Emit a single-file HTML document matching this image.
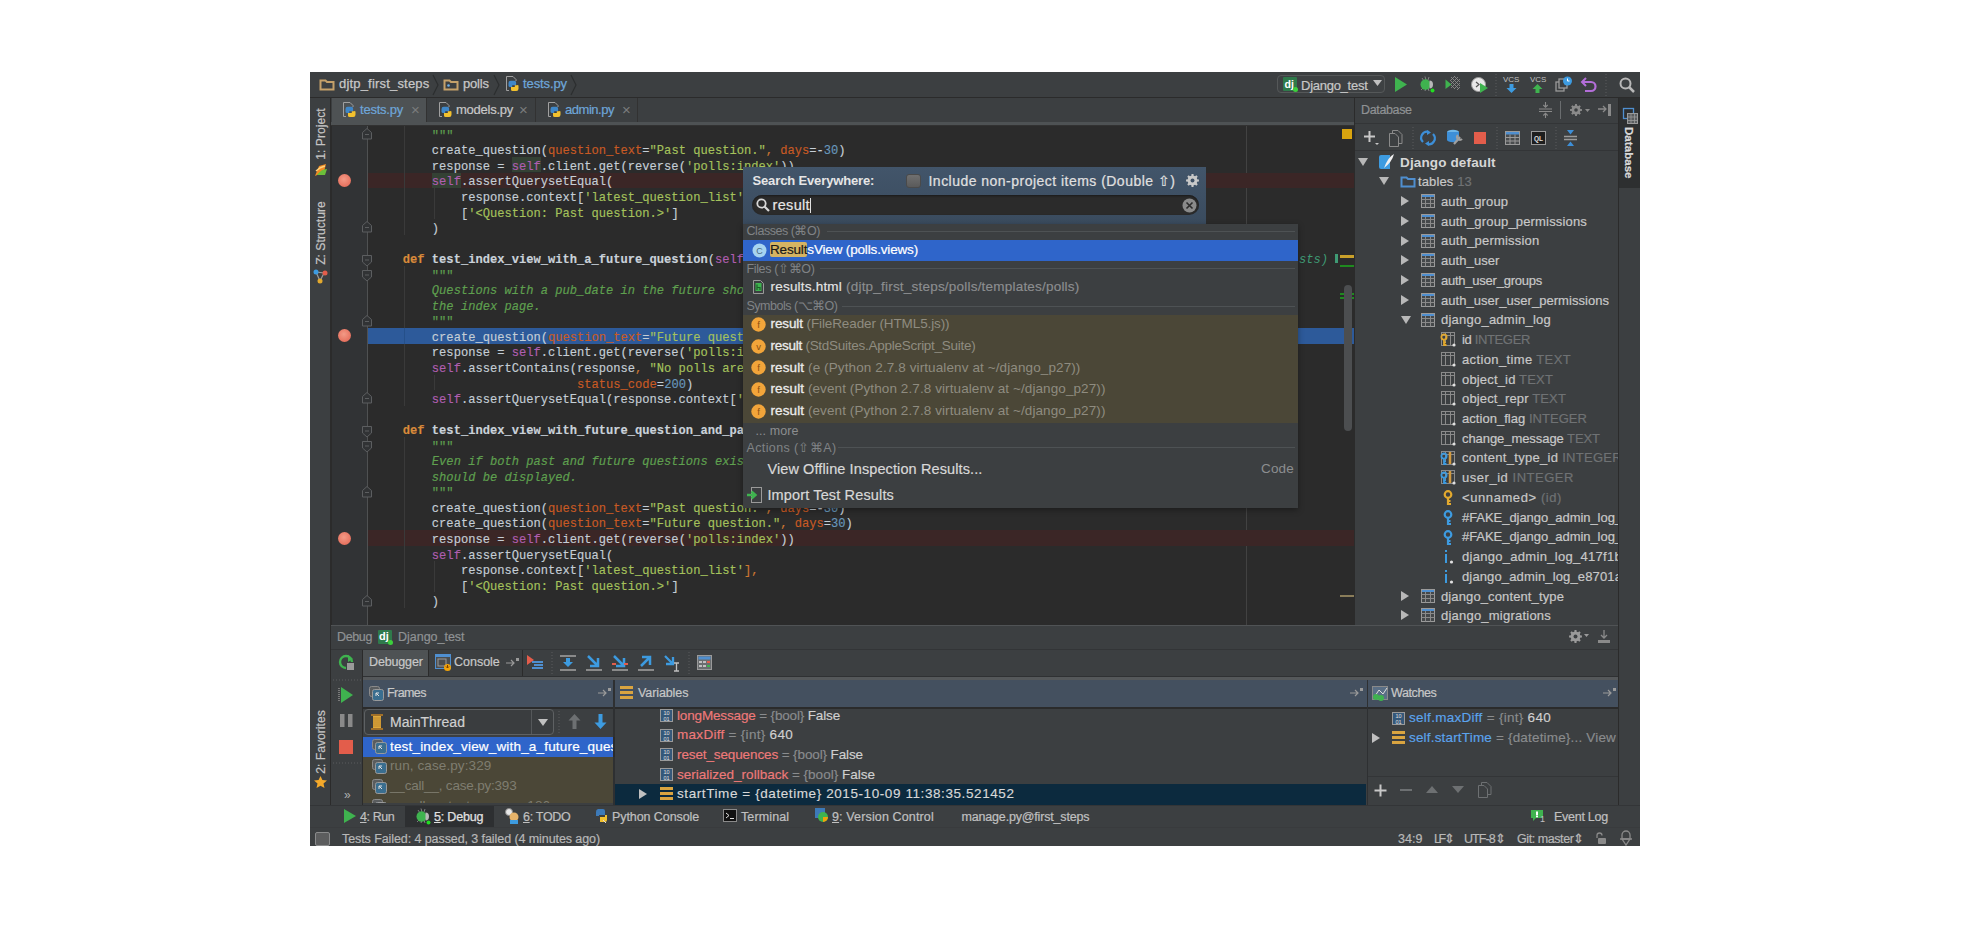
<!DOCTYPE html>
<html><head><meta charset="utf-8"><style>
html,body{margin:0;padding:0;background:#fff;width:1974px;height:935px;overflow:hidden;position:relative}
.a{position:absolute;box-sizing:border-box}
.t{position:absolute;white-space:pre;line-height:20px;height:20px;font-family:'Liberation Sans', sans-serif}
svg.a{overflow:visible}
</style></head><body>
<div class="a" style="left:310px;top:72px;width:1330px;height:774px;background:#3c3f41;"></div>
<div class="a" style="left:310px;top:97px;width:1330px;height:1px;background:#2b2b2b;"></div>
<div class="a" style="left:330px;top:98px;width:1px;height:707px;background:#2b2b2b;"></div>
<div class="a" style="left:331px;top:98px;width:1023px;height:24px;background:#3c3f41;"></div>
<div class="a" style="left:332px;top:98px;width:94px;height:24px;background:#4e5254;"></div>
<div class="a" style="left:426px;top:98px;width:1px;height:24px;background:#323232;"></div>
<div class="a" style="left:535px;top:98px;width:1px;height:24px;background:#323232;"></div>
<div class="a" style="left:637px;top:98px;width:1px;height:24px;background:#323232;"></div>
<div class="a" style="left:331px;top:122px;width:1023px;height:4px;background:#4e5254;"></div>
<div class="a" style="left:331px;top:125px;width:1023px;height:1px;background:#323232;"></div>
<div class="a" style="left:331px;top:126px;width:1024px;height:499px;background:#2b2b2b;"></div>
<div class="a" style="left:332px;top:126px;width:35px;height:499px;background:#313335;"></div>
<div class="a" style="left:367px;top:126px;width:1px;height:499px;background:#4f5152;"></div>
<div class="a" style="left:1246px;top:126px;width:1px;height:499px;background:#424242;"></div>
<div class="a" style="left:1354px;top:98px;width:1px;height:527px;background:#2b2b2b;"></div>
<div class="a" style="left:1355px;top:98px;width:263px;height:527px;background:#3c3f41;"></div>
<div class="a" style="left:1355px;top:123px;width:263px;height:1px;background:#333537;"></div>
<div class="a" style="left:1355px;top:150px;width:263px;height:1px;background:#333537;"></div>
<div class="a" style="left:1618px;top:98px;width:1px;height:707px;background:#2b2b2b;"></div>
<div class="a" style="left:1619px;top:98px;width:21px;height:90px;background:#2d2f30;"></div>
<div class="a" style="left:331px;top:625px;width:1287px;height:1.3px;background:#505355;"></div>
<div class="a" style="left:331px;top:626px;width:1287px;height:24px;background:#3c3f41;"></div>
<div class="a" style="left:331px;top:650px;width:1287px;height:26px;background:#3c3f41;"></div>
<div class="a" style="left:331px;top:649.3px;width:1287px;height:1px;background:#333537;"></div>
<div class="a" style="left:363px;top:676px;width:1255px;height:1px;background:#2f3133;"></div>
<div class="a" style="left:363px;top:677px;width:1255px;height:3px;background:#55585a;"></div>
<div class="a" style="left:363px;top:650px;width:66px;height:26px;background:#4e5254;"></div>
<div class="a" style="left:428px;top:650px;width:1px;height:26px;background:#2b2b2b;"></div>
<div class="a" style="left:522px;top:650px;width:1px;height:26px;background:#2b2b2b;"></div>
<div class="a" style="left:362px;top:650px;width:1px;height:155px;background:#2b2b2b;"></div>
<div class="a" style="left:363px;top:680px;width:1255px;height:27px;background:#44505f;"></div>
<div class="a" style="left:363px;top:707px;width:1255px;height:2px;background:#2b2b2b;"></div>
<div class="a" style="left:613px;top:680px;width:1.5px;height:125px;background:#2e3032;"></div>
<div class="a" style="left:1366.5px;top:680px;width:1.5px;height:125px;background:#2e3032;"></div>
<div class="a" style="left:363px;top:709px;width:250px;height:96px;background:#3c3f41;"></div>
<div class="a" style="left:363px;top:737px;width:250px;height:20px;background:#2f65ca;"></div>
<div class="a" style="left:363px;top:757px;width:250px;height:48px;background:#4b4737;"></div>
<div class="a" style="left:615px;top:709px;width:751px;height:96px;background:#3c3f41;"></div>
<div class="a" style="left:615px;top:784px;width:751px;height:21px;background:#0c2a3e;"></div>
<div class="a" style="left:1368px;top:709px;width:250px;height:96px;background:#3c3f41;"></div>
<div class="a" style="left:1368px;top:776px;width:250px;height:1px;background:#333537;"></div>
<div class="a" style="left:310px;top:805px;width:1330px;height:1px;background:#333537;"></div>
<div class="a" style="left:405px;top:806px;width:89px;height:21px;background:#2d2f31;"></div>
<div class="a" style="left:368px;top:172.65px;width:986px;height:15.55px;background:#3b2626;"></div>
<div class="a" style="left:432px;top:172.95000000000002px;width:29px;height:15.55px;background:#344134;"></div>
<div class="a" style="left:511.7px;top:157.4px;width:29px;height:14.950000000000001px;background:#344134;"></div>
<div class="a" style="left:368px;top:328.15px;width:986px;height:15.55px;background:#2d5a9a;"></div>
<div class="a" style="left:368px;top:530.3px;width:986px;height:15.55px;background:#3b2626;"></div>
<div class="a" style="left:338px;top:174.0px;width:13px;height:13px;border-radius:50%;background:radial-gradient(circle at 45% 40%,#f39a86,#e0604e)"></div>
<div class="a" style="left:338px;top:329.4px;width:13px;height:13px;border-radius:50%;background:radial-gradient(circle at 45% 40%,#f39a86,#e0604e)"></div>
<div class="a" style="left:338px;top:531.6px;width:13px;height:13px;border-radius:50%;background:radial-gradient(circle at 45% 40%,#f39a86,#e0604e)"></div>
<div class="a" style="left:404px;top:126.0px;width:1px;height:108.85000000000002px;background:#3a3a3a;"></div>
<div class="a" style="left:404px;top:265.95000000000005px;width:1px;height:139.95px;background:#3a3a3a;"></div>
<div class="a" style="left:404px;top:437.0px;width:1px;height:171.04999999999995px;background:#3a3a3a;"></div>
<div class="a" style="left:434px;top:188.2px;width:1px;height:31.100000000000023px;background:#3a3a3a;"></div>
<div class="a" style="left:434px;top:561.4000000000001px;width:1px;height:31.09999999999991px;background:#3a3a3a;"></div>
<div class="a" style="left:434px;top:374.8px;width:1px;height:15.55px;background:#3a3a3a;"></div>
<div class="a" style="left:404px;top:328.15px;width:1px;height:15.55px;background:#25508a;"></div>
<svg class="a" style="left:362.3px;top:128.0px;" width="10" height="12" viewBox="0 0 10 12"><path d="M5 0.5 L9.5 4.5 V11 H0.5 V4.5z" fill="#313335" stroke="#5c5e60" stroke-width="1"/><path d="M3 6.5 H7" stroke="#5c5e60" stroke-width="1"/></svg>
<svg class="a" style="left:362.3px;top:221.3px;" width="10" height="12" viewBox="0 0 10 12"><path d="M5 0.5 L9.5 4.5 V11 H0.5 V4.5z" fill="#313335" stroke="#5c5e60" stroke-width="1"/><path d="M3 6.5 H7" stroke="#5c5e60" stroke-width="1"/></svg>
<svg class="a" style="left:362.3px;top:314.6px;" width="10" height="12" viewBox="0 0 10 12"><path d="M5 0.5 L9.5 4.5 V11 H0.5 V4.5z" fill="#313335" stroke="#5c5e60" stroke-width="1"/><path d="M3 6.5 H7" stroke="#5c5e60" stroke-width="1"/></svg>
<svg class="a" style="left:362.3px;top:392.35px;" width="10" height="12" viewBox="0 0 10 12"><path d="M5 0.5 L9.5 4.5 V11 H0.5 V4.5z" fill="#313335" stroke="#5c5e60" stroke-width="1"/><path d="M3 6.5 H7" stroke="#5c5e60" stroke-width="1"/></svg>
<svg class="a" style="left:362.3px;top:485.65000000000003px;" width="10" height="12" viewBox="0 0 10 12"><path d="M5 0.5 L9.5 4.5 V11 H0.5 V4.5z" fill="#313335" stroke="#5c5e60" stroke-width="1"/><path d="M3 6.5 H7" stroke="#5c5e60" stroke-width="1"/></svg>
<svg class="a" style="left:362.3px;top:594.5px;" width="10" height="12" viewBox="0 0 10 12"><path d="M5 0.5 L9.5 4.5 V11 H0.5 V4.5z" fill="#313335" stroke="#5c5e60" stroke-width="1"/><path d="M3 6.5 H7" stroke="#5c5e60" stroke-width="1"/></svg>
<svg class="a" style="left:362.3px;top:254.70000000000002px;" width="10" height="12" viewBox="0 0 10 12"><path d="M0.5 0.5 H9.5 V7 L5 11 L0.5 7z" fill="#313335" stroke="#5c5e60" stroke-width="1"/><path d="M3 5 H7" stroke="#5c5e60" stroke-width="1"/></svg>
<svg class="a" style="left:362.3px;top:270.25000000000006px;" width="10" height="12" viewBox="0 0 10 12"><path d="M0.5 0.5 H9.5 V7 L5 11 L0.5 7z" fill="#313335" stroke="#5c5e60" stroke-width="1"/><path d="M3 5 H7" stroke="#5c5e60" stroke-width="1"/></svg>
<svg class="a" style="left:362.3px;top:425.75px;" width="10" height="12" viewBox="0 0 10 12"><path d="M0.5 0.5 H9.5 V7 L5 11 L0.5 7z" fill="#313335" stroke="#5c5e60" stroke-width="1"/><path d="M3 5 H7" stroke="#5c5e60" stroke-width="1"/></svg>
<svg class="a" style="left:362.3px;top:441.3px;" width="10" height="12" viewBox="0 0 10 12"><path d="M0.5 0.5 H9.5 V7 L5 11 L0.5 7z" fill="#313335" stroke="#5c5e60" stroke-width="1"/><path d="M3 5 H7" stroke="#5c5e60" stroke-width="1"/></svg>
<div class="a" style="left:373.8px;top:126px;padding-top:2.8px;width:980px;height:496.2px;-webkit-text-stroke:0.15px;overflow:hidden;font-family:'Liberation Mono', monospace;font-size:12.1px;line-height:15.55px;color:#c5ced6;white-space:pre"><span style="color:#5fa04f">        """</span>
        create_question(<span style="color:#c85a24">question_text</span>=<span style="color:#a5c25c">"Past question."</span><span style="color:#cc7832">, </span><span style="color:#c85a24">days</span>=-<span style="color:#6897bb">30</span>)
        response = <span style="color:#b05eb0">self</span>.client.get(reverse(<span style="color:#a5c25c">'polls:index'</span>))
        <span style="color:#b05eb0">self</span>.assertQuerysetEqual(
            response.context[<span style="color:#a5c25c">'latest_question_list'</span><span style="color:#cc7832">],</span>
            [<span style="color:#a5c25c">'&lt;Question: Past question.&gt;'</span>]
        )

    <span style="color:#d98a3a;font-weight:bold">def </span><span style="color:#cad2da;font-weight:bold">test_index_view_with_a_future_question</span>(<span style="color:#b05eb0">self</span>):
<span style="color:#5fa04f">        """</span>
<span style="color:#5fa04f;font-style:italic">        Questions with a pub_date in the future should not be displayed on</span>
<span style="color:#5fa04f;font-style:italic">        the index page.</span>
<span style="color:#5fa04f">        """</span>
        create_question(<span style="color:#c85a24">question_text</span>=<span style="color:#a5c25c">"Future question."</span><span style="color:#cc7832">, </span><span style="color:#c85a24">days</span>=<span style="color:#6897bb">30</span>)
        response = <span style="color:#b05eb0">self</span>.client.get(reverse(<span style="color:#a5c25c">'polls:index'</span>))
        <span style="color:#b05eb0">self</span>.assertContains(response<span style="color:#cc7832">, </span><span style="color:#a5c25c">"No polls are available."</span><span style="color:#cc7832">,</span>
                            <span style="color:#c85a24">status_code</span>=<span style="color:#6897bb">200</span>)
        <span style="color:#b05eb0">self</span>.assertQuerysetEqual(response.context[<span style="color:#a5c25c">'latest_question_list'</span>], [])

    <span style="color:#d98a3a;font-weight:bold">def </span><span style="color:#cad2da;font-weight:bold">test_index_view_with_future_question_and_past_question</span>(<span style="color:#b05eb0">self</span>):
<span style="color:#5fa04f">        """</span>
<span style="color:#5fa04f;font-style:italic">        Even if both past and future questions exist, only past questions</span>
<span style="color:#5fa04f;font-style:italic">        should be displayed.</span>
<span style="color:#5fa04f">        """</span>
        create_question(<span style="color:#c85a24">question_text</span>=<span style="color:#a5c25c">"Past question."</span><span style="color:#cc7832">, </span><span style="color:#c85a24">days</span>=-<span style="color:#6897bb">30</span>)
        create_question(<span style="color:#c85a24">question_text</span>=<span style="color:#a5c25c">"Future question."</span><span style="color:#cc7832">, </span><span style="color:#c85a24">days</span>=<span style="color:#6897bb">30</span>)
        response = <span style="color:#b05eb0">self</span>.client.get(reverse(<span style="color:#a5c25c">'polls:index'</span>))
        <span style="color:#b05eb0">self</span>.assertQuerysetEqual(
            response.context[<span style="color:#a5c25c">'latest_question_list'</span><span style="color:#cc7832">],</span>
            [<span style="color:#a5c25c">'&lt;Question: Past question.&gt;'</span>]
        )</div>
<svg class="a" style="left:319px;top:77px;" width="16" height="14" viewBox="0 0 16 14"><path d="M1.5 3.5 h5 l1.5 1.5 h6.5 v7.5 h-13 z" fill="none" stroke="#c5a16a" stroke-width="2"/></svg>
<div class="t" style="left:339px;top:74px;font-size:13px;color:#c8c8c8;letter-spacing:0.185px;-webkit-text-stroke:0.25px #c8c8c8">djtp_first_steps</div>
<svg class="a" style="left:432px;top:74px;" width="8" height="22" viewBox="0 0 8 22"><path d="M1 1 L6 11 L1 21" fill="none" stroke="#2c2e2f" stroke-width="1.2"/></svg>
<svg class="a" style="left:443px;top:77px;" width="16" height="14" viewBox="0 0 16 14"><path d="M1.5 3.5 h5 l1.5 1.5 h6.5 v7.5 h-13 z" fill="none" stroke="#c5a16a" stroke-width="2"/><circle cx="5.5" cy="8.5" r="1.3" fill="#6fb0e8"/></svg>
<div class="t" style="left:463px;top:74px;font-size:13px;color:#c8c8c8;letter-spacing:-0.170px;-webkit-text-stroke:0.25px #c8c8c8">polls</div>
<svg class="a" style="left:493px;top:74px;" width="8" height="22" viewBox="0 0 8 22"><path d="M1 1 L6 11 L1 21" fill="none" stroke="#2c2e2f" stroke-width="1.2"/></svg>
<svg class="a" style="left:505px;top:76px;" width="14" height="16" viewBox="0 0 14 16"><path d="M4 14.5 H1.5 V0.5 H8 L11 3.5 V5" fill="none" stroke="#a0a0a0" stroke-width="1"/><path d="M3.5 10 V7 a2.2 2.2 0 0 1 2.2-2.2 h3.8 a1.6 1.6 0 0 1 1.6 1.6 V9.2 H7.2 V11 H5 a1.5 1.5 0 0 1-1.5-1z" fill="#3f87c8"/><path d="M13.5 9.5 V12.8 a2.2 2.2 0 0 1-2.2 2.2 H7.6 a1.6 1.6 0 0 1-1.6-1.6 V11 H9.8 V9.2 H12 a1.5 1.5 0 0 1 1.5 0.3z" fill="#f2c12e"/></svg>
<div class="t" style="left:523px;top:74px;font-size:13px;color:#6ea6d9;letter-spacing:-0.100px;-webkit-text-stroke:0.25px #6ea6d9">tests.py</div>
<svg class="a" style="left:570px;top:74px;" width="8" height="22" viewBox="0 0 8 22"><path d="M1 1 L6 11 L1 21" fill="none" stroke="#2c2e2f" stroke-width="1.2"/></svg>
<svg class="a" style="left:342px;top:102px;" width="14" height="16" viewBox="0 0 14 16"><path d="M4 14.5 H1.5 V0.5 H8 L11 3.5 V5" fill="none" stroke="#a0a0a0" stroke-width="1"/><path d="M3.5 10 V7 a2.2 2.2 0 0 1 2.2-2.2 h3.8 a1.6 1.6 0 0 1 1.6 1.6 V9.2 H7.2 V11 H5 a1.5 1.5 0 0 1-1.5-1z" fill="#3f87c8"/><path d="M13.5 9.5 V12.8 a2.2 2.2 0 0 1-2.2 2.2 H7.6 a1.6 1.6 0 0 1-1.6-1.6 V11 H9.8 V9.2 H12 a1.5 1.5 0 0 1 1.5 0.3z" fill="#f2c12e"/></svg>
<div class="t" style="left:360px;top:100px;font-size:13px;color:#6ea6d9;letter-spacing:-0.225px;-webkit-text-stroke:0.2px #6ea6d9">tests.py</div>
<div class="t" style="left:411px;top:100px;font-size:15px;color:#7a7c7d;">×</div>
<svg class="a" style="left:438px;top:102px;" width="14" height="16" viewBox="0 0 14 16"><path d="M4 14.5 H1.5 V0.5 H8 L11 3.5 V5" fill="none" stroke="#a0a0a0" stroke-width="1"/><path d="M3.5 10 V7 a2.2 2.2 0 0 1 2.2-2.2 h3.8 a1.6 1.6 0 0 1 1.6 1.6 V9.2 H7.2 V11 H5 a1.5 1.5 0 0 1-1.5-1z" fill="#3f87c8"/><path d="M13.5 9.5 V12.8 a2.2 2.2 0 0 1-2.2 2.2 H7.6 a1.6 1.6 0 0 1-1.6-1.6 V11 H9.8 V9.2 H12 a1.5 1.5 0 0 1 1.5 0.3z" fill="#f2c12e"/></svg>
<div class="t" style="left:456px;top:100px;font-size:13px;color:#c8c8c8;letter-spacing:-0.250px;-webkit-text-stroke:0.2px #c8c8c8">models.py</div>
<div class="t" style="left:519px;top:100px;font-size:15px;color:#7a7c7d;">×</div>
<svg class="a" style="left:547px;top:102px;" width="14" height="16" viewBox="0 0 14 16"><path d="M4 14.5 H1.5 V0.5 H8 L11 3.5 V5" fill="none" stroke="#a0a0a0" stroke-width="1"/><path d="M3.5 10 V7 a2.2 2.2 0 0 1 2.2-2.2 h3.8 a1.6 1.6 0 0 1 1.6 1.6 V9.2 H7.2 V11 H5 a1.5 1.5 0 0 1-1.5-1z" fill="#3f87c8"/><path d="M13.5 9.5 V12.8 a2.2 2.2 0 0 1-2.2 2.2 H7.6 a1.6 1.6 0 0 1-1.6-1.6 V11 H9.8 V9.2 H12 a1.5 1.5 0 0 1 1.5 0.3z" fill="#f2c12e"/></svg>
<div class="t" style="left:565px;top:100px;font-size:13px;color:#6ea6d9;letter-spacing:-0.469px;-webkit-text-stroke:0.2px #6ea6d9">admin.py</div>
<div class="t" style="left:622px;top:100px;font-size:15px;color:#7a7c7d;">×</div>
<div class="t" style="left:294.0px;top:123.5px;width:53px;text-align:center;font-size:12.2px;color:#c4c4c4;font-weight:normal;-webkit-text-stroke:0.2px #c4c4c4;transform:rotate(-90deg);transform-origin:50% 50%">1: Project</div>
<div class="t" style="left:286.5px;top:223.0px;width:68px;text-align:center;font-size:12.2px;color:#c4c4c4;font-weight:normal;-webkit-text-stroke:0.2px #c4c4c4;transform:rotate(-90deg);transform-origin:50% 50%">Z: Structure</div>
<div class="t" style="left:288.0px;top:731.5px;width:65px;text-align:center;font-size:12.2px;color:#c4c4c4;font-weight:normal;-webkit-text-stroke:0.2px #c4c4c4;transform:rotate(-90deg);transform-origin:50% 50%">2: Favorites</div>
<div class="t" style="left:1604.0px;top:142.0px;width:50px;text-align:center;font-size:11.6px;color:#d8d8d8;font-weight:bold;-webkit-text-stroke:0.2px #d8d8d8;transform:rotate(90deg);transform-origin:50% 50%">Database</div>
<div class="a" style="left:1277px;top:75px;width:108px;height:18px;border:1px solid #555859;border-radius:4px;background:#3e4143"></div>
<div class="a" style="left:1283px;top:77px;width:14px;height:14px;background:#2f7a4b;border-radius:1px"></div>
<div class="t" style="left:1284.5px;top:73.5px;font-size:10.5px;color:#ffffff;font-weight:bold;">dj</div>
<div class="a" style="left:1293px;top:87px;width:5px;height:5px;border-radius:50%;background:#3cd03c"></div>
<div class="t" style="left:1301px;top:75.5px;font-size:13px;color:#c8c8c8;letter-spacing:-0.263px;-webkit-text-stroke:0.2px #c8c8c8">Django_test</div>
<svg class="a" style="left:1373px;top:80px;" width="9" height="7" viewBox="0 0 9 7"><path d="M0 0 H9 L4.5 6z" fill="#c0c0c0"/></svg>
<svg class="a" style="left:1395px;top:77px;" width="12" height="15" viewBox="0 0 12 15"><path d="M0 0 L12 7.5 L0 15z" fill="#3fb34f"/></svg>
<svg class="a" style="left:1419px;top:75px;" width="17" height="18" viewBox="0 0 17 18"><path d="M3 3 L5 6 M6 1.5 L7 5 M10 2 L9 5 M13 8 L11 9 M2 15 L5 12 M6 16 L7 13 M10 16 L9 13" stroke="#8a8a8a" stroke-width="0.9"/><ellipse cx="6.5" cy="9.5" rx="5" ry="5.2" fill="#3fb34f"/><path d="M10.5 5.5 A3.5 4 0 0 1 10.5 13.5z" fill="#b8b8b8"/><circle cx="13.5" cy="15.5" r="2" fill="#22dd22"/></svg>
<svg class="a" style="left:1445px;top:76px;" width="16" height="16" viewBox="0 0 16 16"><g stroke="#8a8a8a" stroke-width="0.9" fill="none"><path d="M5 5 L10 0 M5 9 L13 1 M6 12 L15 3 M9 13 L15 7 M12 14 L15 11 M6 1 L15 10 M6 5 L14 13 M6 9 L10 13 M9 0 L15 6"/></g><path d="M0.5 3.5 L6.5 8.5 L0.5 13z" fill="#3fb34f"/></svg>
<svg class="a" style="left:1471px;top:76px;" width="17" height="17" viewBox="0 0 17 17"><circle cx="7.5" cy="8.5" r="7" fill="#e8e8e8" stroke="#9a9a9a"/><path d="M5 6 L8 8.5 L5 11" stroke="#555" fill="none" stroke-width="1.2"/><path d="M9 7 L17 12 L9 17z" fill="#3fb34f"/></svg>
<svg class="a" style="left:1495px;top:74px;" width="2" height="22" viewBox="0 0 2 22"><path d="M1 0 V22" stroke="#5a5d5f" stroke-dasharray="1 2"/></svg>
<div class="t" style="left:1503px;top:70px;font-size:8px;color:#c0c0c0;">VCS</div>
<svg class="a" style="left:1506px;top:84px;" width="11" height="9" viewBox="0 0 11 9"><path d="M3.5 0 H7.5 V4 H10.5 L5.5 9 L0.5 4 H3.5z" fill="#3d9be0"/></svg>
<div class="t" style="left:1530px;top:70px;font-size:8px;color:#c0c0c0;">VCS</div>
<svg class="a" style="left:1532px;top:84px;" width="11" height="9" viewBox="0 0 11 9"><path d="M5.5 0 L10.5 5 H7.5 V9 H3.5 V5 H0.5z" fill="#3fb34f"/></svg>
<svg class="a" style="left:1555px;top:76px;" width="17" height="17" viewBox="0 0 17 17"><rect x="1" y="6" width="8" height="9" fill="none" stroke="#9a9a9a" stroke-width="1.3"/><rect x="4" y="3" width="8" height="9" fill="#3c3f41" stroke="#9a9a9a" stroke-width="1.3"/><circle cx="12.5" cy="5" r="4.5" fill="#3d9be0"/><path d="M12.5 2.5 V5 H14.5" stroke="#fff" fill="none"/></svg>
<svg class="a" style="left:1581px;top:76px;" width="16" height="16" viewBox="0 0 16 16"><path d="M5 2 L1 6 L5 10" fill="none" stroke="#b36ed8" stroke-width="2"/><path d="M1.5 6 H10 a4.5 4.5 0 0 1 0 9 H4" fill="none" stroke="#b36ed8" stroke-width="2.2"/></svg>
<svg class="a" style="left:1605px;top:74px;" width="2" height="22" viewBox="0 0 2 22"><path d="M1 0 V22" stroke="#5a5d5f" stroke-dasharray="1 2"/></svg>
<svg class="a" style="left:1619px;top:77px;" width="16" height="16" viewBox="0 0 16 16"><circle cx="6.5" cy="6.5" r="5" fill="none" stroke="#b8b8b8" stroke-width="2"/><path d="M10 10 L15 15" stroke="#b8b8b8" stroke-width="2.5"/></svg>
<div class="t" style="left:1361px;top:100px;font-size:12.5px;color:#8f9294;letter-spacing:-0.352px;-webkit-text-stroke:0.2px #8f9294">Database</div>
<svg class="a" style="left:1539px;top:102px;" width="13" height="16" viewBox="0 0 13 16"><path d="M0 7 H13 M0 9.5 H13" stroke="#8a8a8a" stroke-width="1.1"/><path d="M6.5 0 V5 M4.3 3 L6.5 5.2 L8.7 3 M6.5 16 V11.5 M4.3 13.5 L6.5 11.3 L8.7 13.5" stroke="#8a8a8a" fill="none" stroke-width="1.1"/></svg>
<div class="a" style="left:1560px;top:101px;width:1px;height:18px;background:#6a6d6f;"></div>
<svg class="a" style="left:1585px;top:109px;" width="5" height="4" viewBox="0 0 5 4"><path d="M0 0 H5 L2.5 3z" fill="#8a8a8a"/></svg>
<svg class="a" style="left:1598px;top:103px;" width="14" height="14" viewBox="0 0 14 14"><path d="M0 6 H8 M5 3 L8 6 L5 9" stroke="#8a8a8a" fill="none" stroke-width="1.3"/><rect x="10" y="1" width="3" height="12" fill="#8a8a8a"/></svg>
<svg class="a" style="left:1364px;top:130px;" width="16" height="16" viewBox="0 0 16 16"><path d="M5.5 1 V12 M0 6.5 H11" stroke="#c8c8c8" stroke-width="2"/><path d="M11 13 H15 L13 15z" fill="#c8c8c8"/></svg>
<svg class="a" style="left:1388px;top:130px;" width="16" height="17" viewBox="0 0 16 17"><path d="M4.5 0.5 H10 L14 4.5 V13.5 H4.5z" fill="none" stroke="#8a8a8a"/><path d="M1.5 3.5 H7 L10.5 7 V16.5 H1.5z" fill="#3c3f41" stroke="#8a8a8a"/></svg>
<svg class="a" style="left:1412px;top:127px;" width="2" height="22" viewBox="0 0 2 22"><path d="M1 0 V22" stroke="#5a5d5f" stroke-dasharray="1 2"/></svg>
<svg class="a" style="left:1420px;top:130px;" width="16" height="16" viewBox="0 0 16 16"><path d="M3 12 A6 6 0 0 1 9 2" fill="none" stroke="#3d8fd8" stroke-width="2.2"/><path d="M13 4 A6 6 0 0 1 7 14" fill="none" stroke="#3d8fd8" stroke-width="2.2"/><path d="M7 0 L11 2.5 L7 5z M9 11 L5 13.5 L9 16z" fill="#3d8fd8"/></svg>
<svg class="a" style="left:1446px;top:129px;" width="17" height="18" viewBox="0 0 17 18"><ellipse cx="7" cy="3" rx="6" ry="2.2" fill="#6fb6e8"/><path d="M1 3 V11 A6 2.2 0 0 0 13 11 V3" fill="#3d8fd8"/><path d="M8 15 L14 8 M12 6 A2.5 2.5 0 1 0 16 10" stroke="#a0a0a0" stroke-width="2.2" fill="none"/></svg>
<div class="a" style="left:1474px;top:132px;width:12px;height:12px;background:#e35d4b;"></div>
<svg class="a" style="left:1496px;top:127px;" width="2" height="22" viewBox="0 0 2 22"><path d="M1 0 V22" stroke="#5a5d5f" stroke-dasharray="1 2"/></svg>
<svg class="a" style="left:1505px;top:131px;" width="15" height="14" viewBox="0 0 15 14"><rect x="0.5" y="0.5" width="14" height="13" fill="#4a4d4f" stroke="#9a9a9a"/><rect x="1" y="1" width="13" height="2.5" fill="#4f8fd0"/><path d="M0.5 6.5 H14.5 M0.5 10 H14.5 M5 3.5 V13.5 M10 3.5 V13.5" stroke="#9a9a9a"/></svg>
<svg class="a" style="left:1531px;top:131px;" width="15" height="14" viewBox="0 0 15 14"><rect x="0.5" y="0.5" width="14" height="13" fill="#1e1e1e" stroke="#9a9a9a"/><text x="7.5" y="10" font-size="6.5" font-family="Liberation Sans" font-weight="bold" fill="#e0e0e0" text-anchor="middle">QL</text></svg>
<svg class="a" style="left:1555px;top:127px;" width="2" height="22" viewBox="0 0 2 22"><path d="M1 0 V22" stroke="#5a5d5f" stroke-dasharray="1 2"/></svg>
<svg class="a" style="left:1564px;top:130px;" width="13" height="16" viewBox="0 0 13 16"><path d="M0 6.5 H13 M0 9.5 H13" stroke="#9a9a9a" stroke-width="1.3"/><path d="M3 0 H10 L6.5 4.5z M3 16 H10 L6.5 11.5z" fill="#3d8fd8"/></svg>
<svg class="a" style="left:1358px;top:157.7px;" width="10" height="9" viewBox="0 0 10 9"><path d="M0 0 H10 L5 8z" fill="#b8b8b8"/></svg>
<svg class="a" style="left:1378px;top:153.7px;" width="17" height="16" viewBox="0 0 17 16"><path d="M1 3 Q1 1 3 1 H12 V15 H3 Q1 15 1 13z" fill="#3d9be0"/><path d="M6 14 Q10 3 16 0 Q14 8 6 14z" fill="#f0f0f0"/></svg>
<div class="t" style="left:1400px;top:152.5px;font-size:13.5px;color:#d6d6d6;letter-spacing:0.139px;font-weight:bold;">Django default</div>
<svg class="a" style="left:1379px;top:177.42999999999998px;" width="10" height="9" viewBox="0 0 10 9"><path d="M0 0 H10 L5 8z" fill="#b8b8b8"/></svg>
<svg class="a" style="left:1400px;top:174.42999999999998px;" width="16" height="14" viewBox="0 0 16 14"><path d="M1.5 3.5 h5 l1.5 1.5 h6.5 v7.5 h-13 z" fill="none" stroke="#4f8fd0" stroke-width="2"/></svg>
<div class="t" style="left:1418px;top:172.23px;font-size:13px;color:#c8c8c8;letter-spacing:0.135px;-webkit-text-stroke:0.2px">tables <span style="color:#6f7274">13</span></div>
<svg class="a" style="left:1401px;top:196.16px;" width="9" height="10" viewBox="0 0 9 10"><path d="M0 0 L8 5 L0 10z" fill="#b8b8b8"/></svg>
<svg class="a" style="left:1421px;top:194.16px;" width="14" height="14" viewBox="0 0 14 14"><rect x="0.5" y="0.5" width="13" height="13" fill="#45484a" stroke="#9a9a9a"/><rect x="1" y="1" width="12" height="2" fill="#4f8fd0"/><path d="M0.5 5.5 H13.5 M0.5 9.5 H13.5 M4.5 3 V13.5 M9.5 3 V13.5" stroke="#8a8a8a"/></svg>
<div class="t" style="left:1441px;top:191.96px;font-size:13px;color:#c8c8c8;letter-spacing:0.142px;-webkit-text-stroke:0.2px">auth_group</div>
<svg class="a" style="left:1401px;top:215.89px;" width="9" height="10" viewBox="0 0 9 10"><path d="M0 0 L8 5 L0 10z" fill="#b8b8b8"/></svg>
<svg class="a" style="left:1421px;top:213.89px;" width="14" height="14" viewBox="0 0 14 14"><rect x="0.5" y="0.5" width="13" height="13" fill="#45484a" stroke="#9a9a9a"/><rect x="1" y="1" width="12" height="2" fill="#4f8fd0"/><path d="M0.5 5.5 H13.5 M0.5 9.5 H13.5 M4.5 3 V13.5 M9.5 3 V13.5" stroke="#8a8a8a"/></svg>
<div class="t" style="left:1441px;top:211.69px;font-size:13px;color:#c8c8c8;letter-spacing:0.165px;-webkit-text-stroke:0.2px">auth_group_permissions</div>
<svg class="a" style="left:1401px;top:235.62px;" width="9" height="10" viewBox="0 0 9 10"><path d="M0 0 L8 5 L0 10z" fill="#b8b8b8"/></svg>
<svg class="a" style="left:1421px;top:233.62px;" width="14" height="14" viewBox="0 0 14 14"><rect x="0.5" y="0.5" width="13" height="13" fill="#45484a" stroke="#9a9a9a"/><rect x="1" y="1" width="12" height="2" fill="#4f8fd0"/><path d="M0.5 5.5 H13.5 M0.5 9.5 H13.5 M4.5 3 V13.5 M9.5 3 V13.5" stroke="#8a8a8a"/></svg>
<div class="t" style="left:1441px;top:231.42000000000002px;font-size:13px;color:#c8c8c8;letter-spacing:0.207px;-webkit-text-stroke:0.2px">auth_permission</div>
<svg class="a" style="left:1401px;top:255.35000000000002px;" width="9" height="10" viewBox="0 0 9 10"><path d="M0 0 L8 5 L0 10z" fill="#b8b8b8"/></svg>
<svg class="a" style="left:1421px;top:253.35000000000002px;" width="14" height="14" viewBox="0 0 14 14"><rect x="0.5" y="0.5" width="13" height="13" fill="#45484a" stroke="#9a9a9a"/><rect x="1" y="1" width="12" height="2" fill="#4f8fd0"/><path d="M0.5 5.5 H13.5 M0.5 9.5 H13.5 M4.5 3 V13.5 M9.5 3 V13.5" stroke="#8a8a8a"/></svg>
<div class="t" style="left:1441px;top:251.15000000000003px;font-size:13px;color:#c8c8c8;letter-spacing:0.075px;-webkit-text-stroke:0.2px">auth_user</div>
<svg class="a" style="left:1401px;top:275.08px;" width="9" height="10" viewBox="0 0 9 10"><path d="M0 0 L8 5 L0 10z" fill="#b8b8b8"/></svg>
<svg class="a" style="left:1421px;top:273.08px;" width="14" height="14" viewBox="0 0 14 14"><rect x="0.5" y="0.5" width="13" height="13" fill="#45484a" stroke="#9a9a9a"/><rect x="1" y="1" width="12" height="2" fill="#4f8fd0"/><path d="M0.5 5.5 H13.5 M0.5 9.5 H13.5 M4.5 3 V13.5 M9.5 3 V13.5" stroke="#8a8a8a"/></svg>
<div class="t" style="left:1441px;top:270.88px;font-size:13px;color:#c8c8c8;letter-spacing:-0.238px;-webkit-text-stroke:0.2px">auth_user_groups</div>
<svg class="a" style="left:1401px;top:294.81px;" width="9" height="10" viewBox="0 0 9 10"><path d="M0 0 L8 5 L0 10z" fill="#b8b8b8"/></svg>
<svg class="a" style="left:1421px;top:292.81px;" width="14" height="14" viewBox="0 0 14 14"><rect x="0.5" y="0.5" width="13" height="13" fill="#45484a" stroke="#9a9a9a"/><rect x="1" y="1" width="12" height="2" fill="#4f8fd0"/><path d="M0.5 5.5 H13.5 M0.5 9.5 H13.5 M4.5 3 V13.5 M9.5 3 V13.5" stroke="#8a8a8a"/></svg>
<div class="t" style="left:1441px;top:290.61px;font-size:13px;color:#c8c8c8;letter-spacing:0.041px;-webkit-text-stroke:0.2px">auth_user_user_permissions</div>
<svg class="a" style="left:1401px;top:315.53999999999996px;" width="10" height="9" viewBox="0 0 10 9"><path d="M0 0 H10 L5 8z" fill="#b8b8b8"/></svg>
<svg class="a" style="left:1421px;top:312.53999999999996px;" width="14" height="14" viewBox="0 0 14 14"><rect x="0.5" y="0.5" width="13" height="13" fill="#45484a" stroke="#9a9a9a"/><rect x="1" y="1" width="12" height="2" fill="#4f8fd0"/><path d="M0.5 5.5 H13.5 M0.5 9.5 H13.5 M4.5 3 V13.5 M9.5 3 V13.5" stroke="#8a8a8a"/></svg>
<div class="t" style="left:1441px;top:310.34px;font-size:13px;color:#c8c8c8;letter-spacing:0.233px;-webkit-text-stroke:0.2px">django_admin_log</div>
<svg class="a" style="left:1441px;top:332.27px;" width="15" height="15" viewBox="0 0 15 15"><rect x="0.5" y="0.5" width="13" height="13" fill="none" stroke="#8a8a8a"/><path d="M0.5 3.5 H13.5 M4.5 0.5 V13.5 M9.5 0.5 V13.5" stroke="#8a8a8a"/><circle cx="13" cy="13" r="1.6" fill="#e0e0e0"/><circle cx="3" cy="5" r="2.6" fill="none" stroke="#e3a92e" stroke-width="1.8"/><path d="M3 7.5 V13 H5.5 M3 10.5 H5" stroke="#e3a92e" stroke-width="1.8"/></svg>
<div class="t" style="left:1462px;top:330.07px;font-size:13px;color:#c8c8c8;letter-spacing:-0.353px;-webkit-text-stroke:0.2px">id <span style="color:#6f7274">INTEGER</span></div>
<svg class="a" style="left:1441px;top:352.0px;" width="15" height="15" viewBox="0 0 15 15"><rect x="0.5" y="0.5" width="13" height="13" fill="none" stroke="#8a8a8a"/><path d="M0.5 3.5 H13.5 M4.5 0.5 V13.5 M9.5 0.5 V13.5" stroke="#8a8a8a"/><circle cx="13" cy="13" r="1.6" fill="#e0e0e0"/></svg>
<div class="t" style="left:1462px;top:349.8px;font-size:13px;color:#c8c8c8;letter-spacing:0.369px;-webkit-text-stroke:0.2px">action_time <span style="color:#6f7274">TEXT</span></div>
<svg class="a" style="left:1441px;top:371.73px;" width="15" height="15" viewBox="0 0 15 15"><rect x="0.5" y="0.5" width="13" height="13" fill="none" stroke="#8a8a8a"/><path d="M0.5 3.5 H13.5 M4.5 0.5 V13.5 M9.5 0.5 V13.5" stroke="#8a8a8a"/><circle cx="13" cy="13" r="1.6" fill="#e0e0e0"/></svg>
<div class="t" style="left:1462px;top:369.53000000000003px;font-size:13px;color:#c8c8c8;letter-spacing:0.167px;-webkit-text-stroke:0.2px">object_id <span style="color:#6f7274">TEXT</span></div>
<svg class="a" style="left:1441px;top:391.46px;" width="15" height="15" viewBox="0 0 15 15"><rect x="0.5" y="0.5" width="13" height="13" fill="none" stroke="#8a8a8a"/><path d="M0.5 3.5 H13.5 M4.5 0.5 V13.5 M9.5 0.5 V13.5" stroke="#8a8a8a"/><circle cx="13" cy="13" r="1.6" fill="#e0e0e0"/></svg>
<div class="t" style="left:1462px;top:389.26px;font-size:13px;color:#c8c8c8;letter-spacing:0.146px;-webkit-text-stroke:0.2px">object_repr <span style="color:#6f7274">TEXT</span></div>
<svg class="a" style="left:1441px;top:411.19px;" width="15" height="15" viewBox="0 0 15 15"><rect x="0.5" y="0.5" width="13" height="13" fill="none" stroke="#8a8a8a"/><path d="M0.5 3.5 H13.5 M4.5 0.5 V13.5 M9.5 0.5 V13.5" stroke="#8a8a8a"/><circle cx="13" cy="13" r="1.6" fill="#e0e0e0"/></svg>
<div class="t" style="left:1462px;top:408.99px;font-size:13px;color:#c8c8c8;letter-spacing:0.037px;-webkit-text-stroke:0.2px">action_flag <span style="color:#6f7274">INTEGER</span></div>
<svg class="a" style="left:1441px;top:430.92px;" width="15" height="15" viewBox="0 0 15 15"><rect x="0.5" y="0.5" width="13" height="13" fill="none" stroke="#8a8a8a"/><path d="M0.5 3.5 H13.5 M4.5 0.5 V13.5 M9.5 0.5 V13.5" stroke="#8a8a8a"/><circle cx="13" cy="13" r="1.6" fill="#e0e0e0"/></svg>
<div class="t" style="left:1462px;top:428.72px;font-size:13px;color:#c8c8c8;letter-spacing:-0.066px;-webkit-text-stroke:0.2px">change_message <span style="color:#6f7274">TEXT</span></div>
<svg class="a" style="left:1441px;top:450.65px;" width="15" height="15" viewBox="0 0 15 15"><rect x="0.5" y="0.5" width="13" height="13" fill="none" stroke="#8a8a8a"/><path d="M0.5 3.5 H13.5 M4.5 0.5 V13.5 M9.5 0.5 V13.5" stroke="#8a8a8a"/><circle cx="13" cy="13" r="1.6" fill="#e0e0e0"/><circle cx="3" cy="5" r="2.6" fill="none" stroke="#3d9be0" stroke-width="1.8"/><path d="M3 7.5 V13 H5.5 M3 10.5 H5" stroke="#3d9be0" stroke-width="1.8"/><path d="M9 1 V13" stroke="#d19a40" stroke-width="2.5"/></svg>
<div class="t" style="left:1462px;top:448.45px;font-size:13px;color:#c8c8c8;letter-spacing:0.296px;-webkit-text-stroke:0.2px">content_type_id <span style="color:#6f7274">INTEGER</span></div>
<svg class="a" style="left:1441px;top:470.38px;" width="15" height="15" viewBox="0 0 15 15"><rect x="0.5" y="0.5" width="13" height="13" fill="none" stroke="#8a8a8a"/><path d="M0.5 3.5 H13.5 M4.5 0.5 V13.5 M9.5 0.5 V13.5" stroke="#8a8a8a"/><circle cx="13" cy="13" r="1.6" fill="#e0e0e0"/><circle cx="3" cy="5" r="2.6" fill="none" stroke="#3d9be0" stroke-width="1.8"/><path d="M3 7.5 V13 H5.5 M3 10.5 H5" stroke="#3d9be0" stroke-width="1.8"/><path d="M9 1 V13" stroke="#d19a40" stroke-width="2.5"/></svg>
<div class="t" style="left:1462px;top:468.18px;font-size:13px;color:#c8c8c8;letter-spacing:0.530px;-webkit-text-stroke:0.2px">user_id <span style="color:#6f7274">INTEGER</span></div>
<svg class="a" style="left:1442px;top:490.11px;" width="12" height="15" viewBox="0 0 12 15"><circle cx="6" cy="4.5" r="3.3" fill="none" stroke="#e3a92e" stroke-width="2.2"/><path d="M6 8 V14 H9 M6 11 H8.5" stroke="#e3a92e" stroke-width="2.2" fill="none"/></svg>
<div class="t" style="left:1462px;top:487.91px;font-size:13px;color:#c8c8c8;letter-spacing:0.586px;-webkit-text-stroke:0.2px">&lt;unnamed&gt; <span style="color:#6f7274">(id)</span></div>
<svg class="a" style="left:1442px;top:509.8399999999999px;" width="12" height="15" viewBox="0 0 12 15"><circle cx="6" cy="4.5" r="3.3" fill="none" stroke="#3d9be0" stroke-width="2.2"/><path d="M6 8 V14 H9 M6 11 H8.5" stroke="#3d9be0" stroke-width="2.2" fill="none"/></svg>
<div class="t" style="left:1462px;top:507.6399999999999px;font-size:13px;color:#c8c8c8;letter-spacing:-0.052px;-webkit-text-stroke:0.2px">#FAKE_django_admin_log_</div>
<svg class="a" style="left:1442px;top:529.5699999999999px;" width="12" height="15" viewBox="0 0 12 15"><circle cx="6" cy="4.5" r="3.3" fill="none" stroke="#3d9be0" stroke-width="2.2"/><path d="M6 8 V14 H9 M6 11 H8.5" stroke="#3d9be0" stroke-width="2.2" fill="none"/></svg>
<div class="t" style="left:1462px;top:527.3699999999999px;font-size:13px;color:#c8c8c8;letter-spacing:-0.052px;-webkit-text-stroke:0.2px">#FAKE_django_admin_log_</div>
<svg class="a" style="left:1442px;top:549.3px;" width="12" height="15" viewBox="0 0 12 15"><rect x="3" y="1" width="2" height="2" fill="#3d9be0"/><rect x="3" y="5" width="2" height="9" fill="#3d9be0"/><circle cx="9.5" cy="13" r="1.6" fill="#e0e0e0"/></svg>
<div class="t" style="left:1462px;top:547.0999999999999px;font-size:13px;color:#c8c8c8;letter-spacing:0.293px;-webkit-text-stroke:0.2px">django_admin_log_417f1b</div>
<svg class="a" style="left:1442px;top:569.03px;" width="12" height="15" viewBox="0 0 12 15"><rect x="3" y="1" width="2" height="2" fill="#3d9be0"/><rect x="3" y="5" width="2" height="9" fill="#3d9be0"/><circle cx="9.5" cy="13" r="1.6" fill="#e0e0e0"/></svg>
<div class="t" style="left:1462px;top:566.8299999999999px;font-size:13px;color:#c8c8c8;letter-spacing:0.136px;-webkit-text-stroke:0.2px">django_admin_log_e8701a</div>
<svg class="a" style="left:1401px;top:590.76px;" width="9" height="10" viewBox="0 0 9 10"><path d="M0 0 L8 5 L0 10z" fill="#b8b8b8"/></svg>
<svg class="a" style="left:1421px;top:588.76px;" width="14" height="14" viewBox="0 0 14 14"><rect x="0.5" y="0.5" width="13" height="13" fill="#45484a" stroke="#9a9a9a"/><rect x="1" y="1" width="12" height="2" fill="#4f8fd0"/><path d="M0.5 5.5 H13.5 M0.5 9.5 H13.5 M4.5 3 V13.5 M9.5 3 V13.5" stroke="#8a8a8a"/></svg>
<div class="t" style="left:1441px;top:586.56px;font-size:13px;color:#c8c8c8;letter-spacing:0.120px;-webkit-text-stroke:0.2px">django_content_type</div>
<svg class="a" style="left:1401px;top:610.49px;" width="9" height="10" viewBox="0 0 9 10"><path d="M0 0 L8 5 L0 10z" fill="#b8b8b8"/></svg>
<svg class="a" style="left:1421px;top:608.49px;" width="14" height="14" viewBox="0 0 14 14"><rect x="0.5" y="0.5" width="13" height="13" fill="#45484a" stroke="#9a9a9a"/><rect x="1" y="1" width="12" height="2" fill="#4f8fd0"/><path d="M0.5 5.5 H13.5 M0.5 9.5 H13.5 M4.5 3 V13.5 M9.5 3 V13.5" stroke="#8a8a8a"/></svg>
<div class="t" style="left:1441px;top:606.29px;font-size:13px;color:#c8c8c8;letter-spacing:0.222px;-webkit-text-stroke:0.2px">django_migrations</div>
<div class="a" style="left:1619px;top:188px;width:21px;height:617px;background:#3c3f41;"></div>
<div class="t" style="left:337px;top:627px;font-size:12.5px;color:#8f9294;letter-spacing:-0.369px;-webkit-text-stroke:0.2px #8f9294">Debug</div>
<div class="a" style="left:378px;top:630px;width:14px;height:14px;background:#2f7a4b;border-radius:1px"></div>
<div class="t" style="left:379px;top:626px;font-size:11px;color:#ffffff;font-weight:bold;">dj</div>
<div class="a" style="left:388px;top:640px;width:5px;height:5px;border-radius:50%;background:#3cd03c"></div>
<div class="t" style="left:398px;top:627px;font-size:12.5px;color:#8f9294;letter-spacing:-0.020px;-webkit-text-stroke:0.2px #8f9294">Django_test</div>
<svg class="a" style="left:1569px;top:630px;" width="13" height="13" viewBox="0 0 13 13"><polygon points="10.89,5.29 12.93,5.52 12.93,7.48 10.89,7.71 10.46,8.74 11.74,10.35 10.35,11.74 8.74,10.46 7.71,10.89 7.48,12.93 5.52,12.93 5.29,10.89 4.26,10.46 2.65,11.74 1.26,10.35 2.54,8.74 2.11,7.71 0.07,7.48 0.07,5.52 2.11,5.29 2.54,4.26 1.26,2.65 2.65,1.26 4.26,2.54 5.29,2.11 5.52,0.07 7.48,0.07 7.71,2.11 8.74,2.54 10.35,1.26 11.74,2.65 10.46,4.26" fill="#9a9a9a"/><circle cx="6.5" cy="6.5" r="4.81" fill="#9a9a9a"/><circle cx="6.5" cy="6.5" r="1.95" fill="#3c3f41"/></svg>
<svg class="a" style="left:1584px;top:634px;" width="5" height="4" viewBox="0 0 5 4"><path d="M0 0 H5 L2.5 3z" fill="#9a9a9a"/></svg>
<svg class="a" style="left:1597px;top:630px;" width="14" height="14" viewBox="0 0 14 14"><path d="M7 0 V8 M4 5 L7 8 L10 5" stroke="#8a8a8a" fill="none" stroke-width="1.3"/><rect x="1" y="10" width="12" height="3" fill="#8a8a8a"/></svg>
<svg class="a" style="left:339px;top:655px;" width="16" height="16" viewBox="0 0 16 16"><path d="M13 7 A6 6 0 1 0 7 13" fill="none" stroke="#3fb34f" stroke-width="2.4"/><path d="M9 0 L14 4 L9 7z" fill="#3fb34f"/><rect x="8" y="8" width="7" height="7" fill="#9a9a9a"/></svg>
<div class="t" style="left:369px;top:652px;font-size:12.5px;color:#c8c8c8;letter-spacing:-0.151px;-webkit-text-stroke:0.2px #c8c8c8">Debugger</div>
<svg class="a" style="left:435px;top:654px;" width="17" height="17" viewBox="0 0 17 17"><rect x="0.5" y="0.5" width="15" height="14" fill="#4a4d4f" stroke="#4f8fd0"/><rect x="1" y="1" width="14" height="2" fill="#4f8fd0"/><rect x="3" y="5" width="8" height="7" fill="none" stroke="#9a9a9a"/><circle cx="12.5" cy="13.5" r="3.5" fill="#f0a30a"/><path d="M12.5 11 V14 M11 12.5 L12.5 14 L14 12.5" stroke="#7a3c00" fill="none"/></svg>
<div class="t" style="left:454px;top:652px;font-size:12.5px;color:#c8c8c8;letter-spacing:-0.011px;-webkit-text-stroke:0.2px #c8c8c8">Console</div>
<svg class="a" style="left:506px;top:657px;" width="13" height="10" viewBox="0 0 13 10"><path d="M0 6 H8 M5 3 L8 6 L5 9" stroke="#9a9a9a" fill="none" stroke-width="1.2"/><rect x="10" y="1" width="3" height="3" fill="#9a9a9a"/></svg>
<svg class="a" style="left:527px;top:655px;" width="16" height="16" viewBox="0 0 16 16"><path d="M0 0 L7 5 L0 10z" fill="#e35d4b"/><path d="M5 7 H16 M7 10 H16 M5 13 H16" stroke="#4f8fd0" stroke-width="2"/></svg>
<svg class="a" style="left:551px;top:652px;" width="2" height="22" viewBox="0 0 2 22"><path d="M1 0 V22" stroke="#5a5d5f" stroke-dasharray="1 2"/></svg>
<svg class="a" style="left:560px;top:655px;" width="16" height="16" viewBox="0 0 16 16"><rect x="0" y="0" width="16" height="2" fill="#8a8a8a"/><path d="M6 3 H10 V7 H13 L8 12 L3 7 H6z" fill="#3d9be0"/><rect x="0" y="14" width="16" height="2" fill="#8a8a8a"/></svg>
<svg class="a" style="left:586px;top:655px;" width="16" height="16" viewBox="0 0 16 16"><path d="M2 1 L11 10 M12 3 V11 H4" stroke="#3d9be0" stroke-width="2.5" fill="none"/><rect x="0" y="14" width="16" height="2" fill="#8a8a8a"/></svg>
<svg class="a" style="left:612px;top:655px;" width="16" height="16" viewBox="0 0 16 16"><path d="M2 1 L11 10 M12 3 V11 H4" stroke="#3d9be0" stroke-width="2.5" fill="none"/><rect x="0" y="8" width="4" height="2" fill="#e35d4b"/><rect x="12" y="8" width="4" height="2" fill="#e35d4b"/><rect x="0" y="14" width="16" height="2" fill="#8a8a8a"/></svg>
<svg class="a" style="left:638px;top:655px;" width="16" height="16" viewBox="0 0 16 16"><path d="M3 11 L12 2 M4 2 H12 V10" stroke="#3d9be0" stroke-width="2.5" fill="none"/><rect x="0" y="14" width="16" height="2" fill="#8a8a8a"/></svg>
<svg class="a" style="left:664px;top:655px;" width="17" height="17" viewBox="0 0 17 17"><path d="M1 1 L8 8 M9 2 V9 H2" stroke="#3d9be0" stroke-width="2.3" fill="none"/><path d="M10 8 H15 M12.5 8 V16 M10 16 H15" stroke="#c0c0c0" stroke-width="1.3"/></svg>
<svg class="a" style="left:688px;top:652px;" width="2" height="22" viewBox="0 0 2 22"><path d="M1 0 V22" stroke="#5a5d5f" stroke-dasharray="1 2"/></svg>
<svg class="a" style="left:697px;top:655px;" width="15" height="15" viewBox="0 0 15 15"><rect x="0.5" y="0.5" width="14" height="14" fill="#6a6d6f" stroke="#9a9a9a"/><rect x="1.5" y="1.5" width="12" height="3" fill="#4f8fd0"/><rect x="2" y="6" width="3" height="2" fill="#c0c0c0"/><rect x="6" y="6" width="3" height="2" fill="#c0c0c0"/><rect x="10" y="6" width="3" height="2" fill="#e35d4b"/><rect x="2" y="10" width="3" height="2" fill="#c0c0c0"/><rect x="6" y="10" width="3" height="2" fill="#c0c0c0"/><rect x="10" y="10" width="3" height="2" fill="#3fb34f"/></svg>
<svg class="a" style="left:333px;top:679px;" width="28" height="2" viewBox="0 0 28 2"><path d="M0 1 H28" stroke="#5a5d5f" stroke-dasharray="1 2"/></svg>
<svg class="a" style="left:339px;top:687px;" width="14" height="16" viewBox="0 0 14 16"><path d="M2 0 L14 8 L2 16z" fill="#3fb34f"/><path d="M0 1 V15" stroke="#7a7a7a" stroke-width="2" stroke-dasharray="1 1"/></svg>
<svg class="a" style="left:340px;top:714px;" width="13" height="13" viewBox="0 0 13 13"><rect x="0" y="0" width="4.5" height="13" fill="#8a8a8a"/><rect x="8" y="0" width="4.5" height="13" fill="#8a8a8a"/></svg>
<div class="a" style="left:339px;top:740px;width:14px;height:14px;background:#e35d4b;"></div>
<svg class="a" style="left:333px;top:762px;" width="28" height="2" viewBox="0 0 28 2"><path d="M0 1 H28" stroke="#5a5d5f" stroke-dasharray="1 2"/></svg>
<div class="t" style="left:344px;top:785px;font-size:12px;color:#b0b0b0;">»</div>
<svg class="a" style="left:314px;top:776px;" width="13" height="12" viewBox="0 0 13 12"><path d="M6.5 0 L8.4 4 L13 4.5 L9.5 7.5 L10.5 12 L6.5 9.7 L2.5 12 L3.5 7.5 L0 4.5 L4.6 4z" fill="#f4a92a"/></svg>
<svg class="a" style="left:369px;top:686px;" width="15" height="15" viewBox="0 0 15 15"><rect x="0.5" y="0.5" width="10" height="10" rx="2" fill="#5a5d5f" stroke="#8a8a8a"/><rect x="3.5" y="3.5" width="11" height="11" rx="2" fill="#3a6e8f" stroke="#9a9a9a"/><path d="M7 7 L10 10 M10 7 H7 V10" stroke="#e0e0e0" stroke-width="1" fill="none"/></svg>
<div class="t" style="left:387px;top:683px;font-size:12.5px;color:#c8c8c8;letter-spacing:-0.579px;-webkit-text-stroke:0.2px #c8c8c8">Frames</div>
<svg class="a" style="left:598px;top:687px;" width="13" height="10" viewBox="0 0 13 10"><path d="M0 6 H8 M5 3 L8 6 L5 9" stroke="#9a9a9a" fill="none" stroke-width="1.2"/><rect x="10" y="1" width="3" height="3" fill="#9a9a9a"/></svg>
<svg class="a" style="left:620px;top:686px;" width="13" height="14" viewBox="0 0 13 14"><rect x="0" y="0" width="13" height="3" fill="#d9a440"/><rect x="0" y="5" width="13" height="3" fill="#d9a440"/><rect x="0" y="10" width="13" height="3" fill="#d9a440"/></svg>
<div class="t" style="left:638px;top:683px;font-size:12.5px;color:#c8c8c8;letter-spacing:-0.099px;-webkit-text-stroke:0.2px #c8c8c8">Variables</div>
<svg class="a" style="left:1350px;top:687px;" width="13" height="10" viewBox="0 0 13 10"><path d="M0 6 H8 M5 3 L8 6 L5 9" stroke="#9a9a9a" fill="none" stroke-width="1.2"/><rect x="10" y="1" width="3" height="3" fill="#9a9a9a"/></svg>
<svg class="a" style="left:1372px;top:686px;" width="17" height="15" viewBox="0 0 17 15"><rect x="0.5" y="0.5" width="15" height="13" fill="#5a6f86" stroke="#8a8a8a"/><path d="M3 10 L7 4 L11 8 L15 2" stroke="#ddd" fill="none"/><circle cx="4" cy="11" r="3" fill="#3fb34f"/><circle cx="9" cy="12" r="3" fill="#3fb34f"/></svg>
<div class="t" style="left:1391px;top:683px;font-size:12.5px;color:#c8c8c8;letter-spacing:-0.396px;-webkit-text-stroke:0.2px #c8c8c8">Watches</div>
<svg class="a" style="left:1603px;top:687px;" width="13" height="10" viewBox="0 0 13 10"><path d="M0 6 H8 M5 3 L8 6 L5 9" stroke="#9a9a9a" fill="none" stroke-width="1.2"/><rect x="10" y="1" width="3" height="3" fill="#9a9a9a"/></svg>
<div class="a" style="left:364px;top:709px;width:190px;height:26px;border:1px solid #5e6163;border-radius:4px;background:#3a3d3f"></div>
<div class="a" style="left:531px;top:710px;width:1px;height:24px;background:#55585a;"></div>
<svg class="a" style="left:371px;top:714px;" width="12" height="16" viewBox="0 0 12 16"><rect x="0" y="0" width="12" height="2" fill="#a0702a"/><rect x="0" y="14" width="12" height="2" fill="#a0702a"/><rect x="2" y="2" width="8" height="12" fill="#e0a93a"/><path d="M2 4 H10 M2 6 H10 M2 8 H10 M2 10 H10 M2 12 H10" stroke="#b5822d" stroke-width="0.8"/></svg>
<div class="t" style="left:390px;top:712px;font-size:14px;color:#d0d0d0;letter-spacing:0.030px;-webkit-text-stroke:0.2px #d0d0d0">MainThread</div>
<svg class="a" style="left:538px;top:719px;" width="10" height="8" viewBox="0 0 10 8"><path d="M0 0 H10 L5 7z" fill="#c0c0c0"/></svg>
<svg class="a" style="left:558px;top:711px;" width="2" height="24" viewBox="0 0 2 24"><path d="M1 0 V24" stroke="#5a5d5f" stroke-dasharray="1 2"/></svg>
<svg class="a" style="left:568px;top:714px;" width="13" height="15" viewBox="0 0 13 15"><path d="M6.5 0 L12.5 6.5 H8.5 V15 H4.5 V6.5 H0.5z" fill="#6d7072"/></svg>
<svg class="a" style="left:594px;top:714px;" width="13" height="15" viewBox="0 0 13 15"><path d="M6.5 15 L12.5 8.5 H8.5 V0 H4.5 V8.5 H0.5z" fill="#3d9be0"/></svg>
<svg class="a" style="left:372px;top:739px;" width="15" height="15" viewBox="0 0 15 15"><rect x="0.5" y="0.5" width="10" height="10" rx="2" fill="#5a5d5f" stroke="#8a8a8a"/><rect x="3.5" y="3.5" width="11" height="11" rx="2" fill="#3a6e8f" stroke="#9a9a9a"/><path d="M7 7 L10 10 M10 7 H7 V10" stroke="#e0e0e0" stroke-width="1" fill="none"/></svg>
<div class="t" style="left:390px;top:737px;font-size:13.5px;color:#ffffff;letter-spacing:0.180px;-webkit-text-stroke:0.2px #fff;width:223px;overflow:hidden">test_index_view_with_a_future_question</div>
<div class="a" style="left:613px;top:737px;width:2px;height:20px;background:#2b2b2b;"></div>
<svg class="a" style="left:372px;top:759.3px;" width="15" height="15" viewBox="0 0 15 15"><rect x="0.5" y="0.5" width="10" height="10" rx="2" fill="#5a5d5f" stroke="#8a8a8a"/><rect x="3.5" y="3.5" width="11" height="11" rx="2" fill="#3a6e8f" stroke="#9a9a9a"/><path d="M7 7 L10 10 M10 7 H7 V10" stroke="#e0e0e0" stroke-width="1" fill="none"/></svg>
<div class="t" style="left:390px;top:756.3px;font-size:13.5px;color:#7f7d70;letter-spacing:0.098px;">run, case.py:329</div>
<svg class="a" style="left:372px;top:779.0px;" width="15" height="15" viewBox="0 0 15 15"><rect x="0.5" y="0.5" width="10" height="10" rx="2" fill="#5a5d5f" stroke="#8a8a8a"/><rect x="3.5" y="3.5" width="11" height="11" rx="2" fill="#3a6e8f" stroke="#9a9a9a"/><path d="M7 7 L10 10 M10 7 H7 V10" stroke="#e0e0e0" stroke-width="1" fill="none"/></svg>
<div class="t" style="left:390px;top:776.0px;font-size:13.5px;color:#7f7d70;letter-spacing:-0.195px;">__call__, case.py:393</div>
<svg class="a" style="left:372px;top:798.6999999999999px;overflow:hidden" width="15" height="5" viewBox="0 0 15 5"><rect x="0.5" y="0.5" width="10" height="10" rx="2" fill="#5a5d5f" stroke="#8a8a8a"/><rect x="3.5" y="3.5" width="11" height="11" rx="2" fill="#3a6e8f" stroke="#9a9a9a"/></svg>
<div class="t" style="left:390px;top:795.6999999999999px;font-size:13.5px;color:#7f7d70;letter-spacing:0.034px;height:8px;overflow:hidden">__call__, testcases.py:186</div>
<div class="a" style="left:363px;top:803px;width:250px;height:2px;background:#3c3f41;"></div>
<svg class="a" style="left:660px;top:709.1px;" width="13" height="13" viewBox="0 0 13 13"><rect x="0.5" y="0.5" width="12" height="12" fill="#35587a" stroke="#9a9a9a"/><text x="6.5" y="6" font-size="5.5" font-family="Liberation Sans" fill="#e0e0e0" text-anchor="middle">10</text><text x="6.5" y="11.5" font-size="5.5" font-family="Liberation Sans" fill="#e0e0e0" text-anchor="middle">01</text></svg>
<div class="t" style="left:677px;top:705.6px;font-size:13.5px;color:#d0d0d0;letter-spacing:-0.154px;-webkit-text-stroke:0.15px"><span style="color:#ef7a7a">longMessage</span><span style="color:#8a8c8e"> = </span><span style="color:#8a8c8e">{bool}</span><span style="color:#d0d0d0"> False</span></div>
<svg class="a" style="left:660px;top:728.75px;" width="13" height="13" viewBox="0 0 13 13"><rect x="0.5" y="0.5" width="12" height="12" fill="#35587a" stroke="#9a9a9a"/><text x="6.5" y="6" font-size="5.5" font-family="Liberation Sans" fill="#e0e0e0" text-anchor="middle">10</text><text x="6.5" y="11.5" font-size="5.5" font-family="Liberation Sans" fill="#e0e0e0" text-anchor="middle">01</text></svg>
<div class="t" style="left:677px;top:725.25px;font-size:13.5px;color:#d0d0d0;letter-spacing:0.291px;-webkit-text-stroke:0.15px"><span style="color:#ef7a7a">maxDiff</span><span style="color:#8a8c8e"> = </span><span style="color:#8a8c8e">{int}</span><span style="color:#d0d0d0"> 640</span></div>
<svg class="a" style="left:660px;top:748.4px;" width="13" height="13" viewBox="0 0 13 13"><rect x="0.5" y="0.5" width="12" height="12" fill="#35587a" stroke="#9a9a9a"/><text x="6.5" y="6" font-size="5.5" font-family="Liberation Sans" fill="#e0e0e0" text-anchor="middle">10</text><text x="6.5" y="11.5" font-size="5.5" font-family="Liberation Sans" fill="#e0e0e0" text-anchor="middle">01</text></svg>
<div class="t" style="left:677px;top:744.9px;font-size:13.5px;color:#d0d0d0;letter-spacing:-0.118px;-webkit-text-stroke:0.15px"><span style="color:#ef7a7a">reset_sequences</span><span style="color:#8a8c8e"> = </span><span style="color:#8a8c8e">{bool}</span><span style="color:#d0d0d0"> False</span></div>
<svg class="a" style="left:660px;top:768.0500000000001px;" width="13" height="13" viewBox="0 0 13 13"><rect x="0.5" y="0.5" width="12" height="12" fill="#35587a" stroke="#9a9a9a"/><text x="6.5" y="6" font-size="5.5" font-family="Liberation Sans" fill="#e0e0e0" text-anchor="middle">10</text><text x="6.5" y="11.5" font-size="5.5" font-family="Liberation Sans" fill="#e0e0e0" text-anchor="middle">01</text></svg>
<div class="t" style="left:677px;top:764.5500000000001px;font-size:13.5px;color:#d0d0d0;letter-spacing:0.007px;-webkit-text-stroke:0.15px"><span style="color:#ef7a7a">serialized_rollback</span><span style="color:#8a8c8e"> = </span><span style="color:#8a8c8e">{bool}</span><span style="color:#d0d0d0"> False</span></div>
<svg class="a" style="left:639px;top:789px;" width="9" height="10" viewBox="0 0 9 10"><path d="M0 0 L8 5 L0 10z" fill="#c0c0c0"/></svg>
<svg class="a" style="left:660px;top:787px;" width="13" height="14" viewBox="0 0 13 14"><rect x="0" y="0" width="13" height="3" fill="#d9a440"/><rect x="0" y="5" width="13" height="3" fill="#d9a440"/><rect x="0" y="10" width="13" height="3" fill="#d9a440"/></svg>
<div class="t" style="left:677px;top:784px;font-size:13.5px;color:#d8d8d8;letter-spacing:0.585px;-webkit-text-stroke:0.15px #d8d8d8">startTime = {datetime} 2015-10-09 11:38:35.521452</div>
<svg class="a" style="left:1392px;top:711.5px;" width="13" height="13" viewBox="0 0 13 13"><rect x="0.5" y="0.5" width="12" height="12" fill="#35587a" stroke="#9a9a9a"/><text x="6.5" y="6" font-size="5.5" font-family="Liberation Sans" fill="#e0e0e0" text-anchor="middle">10</text><text x="6.5" y="11.5" font-size="5.5" font-family="Liberation Sans" fill="#e0e0e0" text-anchor="middle">01</text></svg>
<div class="t" style="left:1409px;top:708px;font-size:13.5px;color:#d0d0d0;letter-spacing:0.282px;-webkit-text-stroke:0.15px"><span style="color:#5ba4ee">self.maxDiff</span><span style="color:#8a8c8e"> = </span><span style="color:#8a8c8e">{int}</span><span style="color:#d0d0d0"> 640</span></div>
<svg class="a" style="left:1372px;top:733px;" width="9" height="10" viewBox="0 0 9 10"><path d="M0 0 L8 5 L0 10z" fill="#c0c0c0"/></svg>
<svg class="a" style="left:1392px;top:731px;" width="13" height="14" viewBox="0 0 13 14"><rect x="0" y="0" width="13" height="3" fill="#d9a440"/><rect x="0" y="5" width="13" height="3" fill="#d9a440"/><rect x="0" y="10" width="13" height="3" fill="#d9a440"/></svg>
<div class="t" style="left:1409px;top:728px;font-size:13.5px;color:#d0d0d0;letter-spacing:0.179px;-webkit-text-stroke:0.15px"><span style="color:#5ba4ee">self.startTime</span><span style="color:#8a8c8e"> = </span><span style="color:#8a8c8e">{datetime}... View</span></div>
<div class="a" style="left:1618px;top:709px;width:22px;height:96px;background:#3c3f41;"></div>
<div class="a" style="left:1618px;top:98px;width:1px;height:707px;background:#2b2b2b;"></div>
<svg class="a" style="left:1374px;top:784px;" width="13" height="13" viewBox="0 0 13 13"><path d="M6.5 0.5 V12.5 M0.5 6.5 H12.5" stroke="#c8c8c8" stroke-width="2"/></svg>
<svg class="a" style="left:1400px;top:789px;" width="12" height="3" viewBox="0 0 12 3"><rect x="0" y="0" width="12" height="2" fill="#6d7072"/></svg>
<svg class="a" style="left:1426px;top:786px;" width="12" height="7" viewBox="0 0 12 7"><path d="M0 7 L6 0 L12 7z" fill="#6d7072"/></svg>
<svg class="a" style="left:1452px;top:786px;" width="12" height="7" viewBox="0 0 12 7"><path d="M0 0 L6 7 L12 0z" fill="#6d7072"/></svg>
<svg class="a" style="left:1477px;top:782px;" width="15" height="16" viewBox="0 0 15 16"><path d="M4.5 0.5 H10 L14 4.5 V12.5 H4.5z" fill="none" stroke="#6d7072"/><path d="M1.5 3.5 H7 L10.5 7 V15.5 H1.5z" fill="#3c3f41" stroke="#6d7072"/></svg>
<svg class="a" style="left:344px;top:809px;" width="12" height="14" viewBox="0 0 12 14"><path d="M0 0 L12 7 L0 14z" fill="#3fb34f"/></svg>
<div class="t" style="left:360px;top:806.7px;font-size:12.5px;color:#c0c0c0;letter-spacing:-0.407px;-webkit-text-stroke:0.2px #c0c0c0"><span style="text-decoration:underline">4</span>: Run</div>
<svg class="a" style="left:415px;top:807px;" width="17" height="18" viewBox="0 0 17 18"><path d="M3 3 L5 6 M6 1.5 L7 5 M10 2 L9 5 M13 8 L11 9 M2 15 L5 12 M6 16 L7 13 M10 16 L9 13" stroke="#8a8a8a" stroke-width="0.9"/><ellipse cx="6.5" cy="9.5" rx="5" ry="5.2" fill="#3fb34f"/><path d="M10.5 5.5 A3.5 4 0 0 1 10.5 13.5z" fill="#b8b8b8"/><circle cx="13.5" cy="15.5" r="2" fill="#22dd22"/></svg>
<div class="t" style="left:434px;top:806.7px;font-size:12.5px;color:#e0e0e0;letter-spacing:-0.179px;-webkit-text-stroke:0.25px #e0e0e0"><span style="text-decoration:underline">5</span>: Debug</div>
<svg class="a" style="left:505px;top:808px;" width="15" height="16" viewBox="0 0 15 16"><circle cx="4" cy="4" r="3.5" fill="#e8e8e8" stroke="#888"/><circle cx="9" cy="9" r="4.5" fill="#e6b36a"/><rect x="5" y="12" width="8" height="4" fill="#3d9be0"/></svg>
<div class="t" style="left:523px;top:806.7px;font-size:12.5px;color:#c0c0c0;letter-spacing:-0.295px;-webkit-text-stroke:0.2px #c0c0c0"><span style="text-decoration:underline">6</span>: TODO</div>
<svg class="a" style="left:594px;top:808px;" width="15" height="16" viewBox="0 0 15 16"><path d="M4 1 H9 a2 2 0 0 1 2 2 V7 H5 V8 H2 V4 a3 3 0 0 1 2-3z" fill="#3d7ab8"/><path d="M11 7 H13 V12 a2 2 0 0 1-2 2 H6 V9 H11z" fill="#f2c12e"/><path d="M9 12 L12 15" stroke="#ddd"/></svg>
<div class="t" style="left:612px;top:806.7px;font-size:12.5px;color:#c0c0c0;letter-spacing:-0.076px;-webkit-text-stroke:0.2px #c0c0c0">Python Console</div>
<svg class="a" style="left:723px;top:809px;" width="14" height="13" viewBox="0 0 14 13"><rect x="0.5" y="0.5" width="13" height="12" fill="#111" stroke="#8a8a8a"/><path d="M3 4 L6 6.5 L3 9 M7 9.5 H11" stroke="#e0e0e0" fill="none"/></svg>
<div class="t" style="left:741px;top:806.7px;font-size:12.5px;color:#c0c0c0;letter-spacing:0.119px;-webkit-text-stroke:0.2px #c0c0c0">Terminal</div>
<svg class="a" style="left:815px;top:808px;" width="15" height="16" viewBox="0 0 15 16"><rect x="0" y="0" width="10" height="10" fill="#3d7ab8"/><circle cx="8" cy="9" r="5" fill="#3fb34f"/><path d="M8 9 V14 A5 5 0 0 0 13 9z" fill="#f0a30a"/></svg>
<div class="t" style="left:832px;top:806.7px;font-size:12.5px;color:#c0c0c0;letter-spacing:0.140px;-webkit-text-stroke:0.2px #c0c0c0"><span style="text-decoration:underline">9</span>: Version Control</div>
<div class="t" style="left:961.5px;top:806.7px;font-size:12.5px;color:#c0c0c0;letter-spacing:-0.172px;-webkit-text-stroke:0.2px #c0c0c0">manage.py@first_steps</div>
<svg class="a" style="left:1530px;top:809px;" width="20" height="15" viewBox="0 0 20 15"><path d="M1 1 H13 V9 H6 L3 12 V9 H1z" fill="#3fb34f"/><rect x="6" y="2.5" width="2" height="4" fill="#fff"/><rect x="6" y="7" width="2" height="1.3" fill="#fff"/></svg>
<div class="t" style="left:1540px;top:809px;font-size:9px;color:#c0c0c0;">1</div>
<div class="t" style="left:1554px;top:806.7px;font-size:12.5px;color:#c0c0c0;letter-spacing:-0.266px;-webkit-text-stroke:0.2px #c0c0c0">Event Log</div>
<div class="a" style="left:315px;top:831.5px;width:15px;height:14px;border:1px solid #8a8b8c;border-radius:2px;background:#5c5d5e"></div>
<div class="a" style="left:310px;top:826.5px;width:1330px;height:1px;background:#393b3d;"></div>
<div class="t" style="left:342px;top:829px;font-size:12.5px;color:#b8b8b8;letter-spacing:-0.082px;-webkit-text-stroke:0.2px #b8b8b8">Tests Failed: 4 passed, 3 failed (4 minutes ago)</div>
<div class="t" style="left:1398px;top:829px;font-size:12.5px;color:#b8b8b8;letter-spacing:0.039px;-webkit-text-stroke:0.2px #b8b8b8">34:9</div>
<div class="t" style="left:1434px;top:829px;font-size:12.5px;color:#b8b8b8;letter-spacing:-2.531px;-webkit-text-stroke:0.2px #b8b8b8">LF⇕</div>
<div class="t" style="left:1464px;top:829px;font-size:12.5px;color:#b8b8b8;letter-spacing:-0.904px;-webkit-text-stroke:0.2px #b8b8b8">UTF-8⇕</div>
<div class="t" style="left:1517px;top:829px;font-size:12.5px;color:#b8b8b8;letter-spacing:-0.427px;-webkit-text-stroke:0.2px #b8b8b8">Git: master⇕</div>
<svg class="a" style="left:1595px;top:832px;" width="11" height="12" viewBox="0 0 11 12"><path d="M2 6 V3.5 a2.5 2.5 0 0 1 5 0" stroke="#8a8a8a" fill="none" stroke-width="1.3"/><rect x="3" y="6" width="8" height="6" rx="1" fill="#8a8a8a"/></svg>
<svg class="a" style="left:1619px;top:831px;" width="14" height="15" viewBox="0 0 14 15"><path d="M3 4 a4 4 0 0 1 8 0 V8 H3z" fill="none" stroke="#8a8a8a" stroke-width="1.3"/><path d="M1 8 H13 M3 8 L7 14 L11 8" stroke="#8a8a8a" fill="none" stroke-width="1.3"/></svg>
<div class="a" style="left:743px;top:167px;width:463px;height:57px;background:linear-gradient(#42556a,#3a4b5e);"></div>
<div class="t" style="left:752.5px;top:171px;font-size:13px;color:#e6e6e6;letter-spacing:-0.139px;font-weight:bold;">Search Everywhere:</div>
<div class="a" style="left:906px;top:174px;width:15px;height:14px;border:1px solid #4a4a4a;border-radius:3px;background:linear-gradient(#707070,#5a5a5a)"></div>
<div class="t" style="left:928.5px;top:171px;font-size:14px;color:#e0e0e0;letter-spacing:0.475px;-webkit-text-stroke:0.2px #e0e0e0">Include non-project items (Double ⇧)</div>
<svg class="a" style="left:1186px;top:174px;" width="13" height="13" viewBox="0 0 13 13"><polygon points="10.89,5.29 12.93,5.52 12.93,7.48 10.89,7.71 10.46,8.74 11.74,10.35 10.35,11.74 8.74,10.46 7.71,10.89 7.48,12.93 5.52,12.93 5.29,10.89 4.26,10.46 2.65,11.74 1.26,10.35 2.54,8.74 2.11,7.71 0.07,7.48 0.07,5.52 2.11,5.29 2.54,4.26 1.26,2.65 2.65,1.26 4.26,2.54 5.29,2.11 5.52,0.07 7.48,0.07 7.71,2.11 8.74,2.54 10.35,1.26 11.74,2.65 10.46,4.26" fill="#c8c8c8"/><circle cx="6.5" cy="6.5" r="4.81" fill="#c8c8c8"/><circle cx="6.5" cy="6.5" r="1.95" fill="#3e5064"/></svg>
<div class="a" style="left:752px;top:195px;width:447px;height:20px;border-radius:10px;background:#2b2b2b;box-shadow:inset 0 1px 2px #1a1a1a"></div>
<svg class="a" style="left:756px;top:198px;" width="14" height="14" viewBox="0 0 14 14"><circle cx="5.5" cy="5.5" r="4.2" fill="none" stroke="#d8d8d8" stroke-width="1.8"/><path d="M8.5 8.5 L13 13" stroke="#d8d8d8" stroke-width="2.2"/></svg>
<div class="t" style="left:772.5px;top:195px;font-size:14.5px;color:#e6e6e6;letter-spacing:0.339px;-webkit-text-stroke:0.2px #e6e6e6">result</div>
<div class="a" style="left:810px;top:198px;width:1px;height:15px;background:#e0e0e0;"></div>
<svg class="a" style="left:1182px;top:198px;" width="15" height="15" viewBox="0 0 15 15"><circle cx="7.5" cy="7.5" r="7" fill="#8a8a8a"/><path d="M4.5 4.5 L10.5 10.5 M10.5 4.5 L4.5 10.5" stroke="#2b2b2b" stroke-width="1.6"/></svg>
<div class="a" style="left:743px;top:224px;width:555px;height:284px;background:#3c3f41;box-shadow:0 2px 6px rgba(0,0,0,0.35)"></div>
<div class="t" style="left:746.5px;top:221px;font-size:12.5px;color:#808386;letter-spacing:-0.457px;">Classes (⌘O)</div>
<div class="a" style="left:827px;top:231px;width:468px;height:1px;background:#4e5254;"></div>
<div class="a" style="left:743px;top:240px;width:555px;height:21px;background:#2f65ca;"></div>
<svg class="a" style="left:752px;top:243px;" width="15" height="15" viewBox="0 0 15 15"><circle cx="7.5" cy="7.5" r="7" fill="#a6d4f0"/><text x="7.5" y="11" font-size="9" font-family="Liberation Sans" fill="#4a6a80" text-anchor="middle">C</text></svg>
<div class="a" style="left:769.5px;top:242px;width:37px;height:15px;background:#d5b462;border-radius:2px"></div>
<div class="t" style="left:770px;top:239.6px;font-size:13.5px;color:#ffffff;letter-spacing:-0.162px;-webkit-text-stroke:0.2px"><span style="color:#1a1a1a">Result</span>sView (polls.views)</div>
<div class="t" style="left:746.5px;top:258.5px;font-size:12.5px;color:#808386;letter-spacing:-0.357px;">Files (⇧⌘O)</div>
<div class="a" style="left:820px;top:268px;width:475px;height:1px;background:#4e5254;"></div>
<svg class="a" style="left:753px;top:280px;" width="11" height="14" viewBox="0 0 11 14"><path d="M0.5 0.5 H7.5 L10.5 3.5 V13.5 H0.5z" fill="#3c3f41" stroke="#9a9a9a"/><rect x="2.5" y="3" width="6" height="8" fill="#3fb34f"/><path d="M4 4.5 V10 M4 7.5 H7 V10" stroke="#1f5f2a" stroke-width="1.2" fill="none"/></svg>
<div class="t" style="left:770.5px;top:277.3px;font-size:13.5px;color:#e6e6e6;letter-spacing:0.210px;-webkit-text-stroke:0.15px">results.html <span style="color:#8c8e90">(djtp_first_steps/polls/templates/polls)</span></div>
<div class="t" style="left:746.5px;top:296px;font-size:12.5px;color:#808386;letter-spacing:-0.496px;">Symbols (⌥⌘O)</div>
<div class="a" style="left:842px;top:306px;width:453px;height:1px;background:#4e5254;"></div>
<div class="a" style="left:743px;top:315px;width:555px;height:108px;background:#4b4737;"></div>
<svg class="a" style="left:751px;top:316.9px;" width="15" height="15" viewBox="0 0 15 15"><circle cx="7.5" cy="7.5" r="7.2" fill="#f2a53a"/><text x="7.5" y="11" font-size="9.5" font-family="Liberation Sans" fill="#8a4f10" text-anchor="middle">f</text></svg>
<div class="t" style="left:770.5px;top:314.4px;font-size:13.5px;color:#e6e6e6;letter-spacing:-0.110px;"><span style="color:#ececec;-webkit-text-stroke:0.3px #ececec">result </span><span style="color:#8f8c80">(FileReader (HTML5.js))</span></div>
<svg class="a" style="left:751px;top:338.54999999999995px;" width="15" height="15" viewBox="0 0 15 15"><circle cx="7.5" cy="7.5" r="7.2" fill="#f2a53a"/><text x="7.5" y="11" font-size="9.5" font-family="Liberation Sans" fill="#8a4f10" text-anchor="middle">v</text></svg>
<div class="t" style="left:770.5px;top:336.04999999999995px;font-size:13.5px;color:#e6e6e6;letter-spacing:-0.267px;"><span style="color:#ececec;-webkit-text-stroke:0.3px #ececec">result </span><span style="color:#8f8c80">(StdSuites.AppleScript_Suite)</span></div>
<svg class="a" style="left:751px;top:360.2px;" width="15" height="15" viewBox="0 0 15 15"><circle cx="7.5" cy="7.5" r="7.2" fill="#f2a53a"/><text x="7.5" y="11" font-size="9.5" font-family="Liberation Sans" fill="#8a4f10" text-anchor="middle">f</text></svg>
<div class="t" style="left:770.5px;top:357.7px;font-size:13.5px;color:#e6e6e6;letter-spacing:0.109px;"><span style="color:#ececec;-webkit-text-stroke:0.3px #ececec">result </span><span style="color:#8f8c80">(e (Python 2.7.8 virtualenv at ~/django_p27))</span></div>
<svg class="a" style="left:751px;top:381.84999999999997px;" width="15" height="15" viewBox="0 0 15 15"><circle cx="7.5" cy="7.5" r="7.2" fill="#f2a53a"/><text x="7.5" y="11" font-size="9.5" font-family="Liberation Sans" fill="#8a4f10" text-anchor="middle">f</text></svg>
<div class="t" style="left:770.5px;top:379.34999999999997px;font-size:13.5px;color:#e6e6e6;letter-spacing:0.092px;"><span style="color:#ececec;-webkit-text-stroke:0.3px #ececec">result </span><span style="color:#8f8c80">(event (Python 2.7.8 virtualenv at ~/django_p27))</span></div>
<svg class="a" style="left:751px;top:403.5px;" width="15" height="15" viewBox="0 0 15 15"><circle cx="7.5" cy="7.5" r="7.2" fill="#f2a53a"/><text x="7.5" y="11" font-size="9.5" font-family="Liberation Sans" fill="#8a4f10" text-anchor="middle">f</text></svg>
<div class="t" style="left:770.5px;top:401.0px;font-size:13.5px;color:#e6e6e6;letter-spacing:0.092px;"><span style="color:#ececec;-webkit-text-stroke:0.3px #ececec">result </span><span style="color:#8f8c80">(event (Python 2.7.8 virtualenv at ~/django_p27))</span></div>
<div class="t" style="left:755.5px;top:421px;font-size:12.5px;color:#8c8e90;letter-spacing:0.078px;">... more</div>
<div class="t" style="left:746.5px;top:437.5px;font-size:12.5px;color:#808386;letter-spacing:0.374px;">Actions (⇧⌘A)</div>
<div class="a" style="left:838px;top:447px;width:457px;height:1px;background:#4e5254;"></div>
<div class="t" style="left:767.4px;top:458.5px;font-size:14.5px;color:#d8d8d8;letter-spacing:0.105px;-webkit-text-stroke:0.2px #d8d8d8">View Offline Inspection Results...</div>
<div class="t" style="left:1261px;top:458.5px;font-size:13.5px;color:#8c8e90;letter-spacing:0.180px;">Code</div>
<svg class="a" style="left:747px;top:487px;" width="15" height="16" viewBox="0 0 15 16"><rect x="4.5" y="0.5" width="10" height="15" fill="#3c3f41" stroke="#9a9a9a"/><path d="M0 8 H7 M4.5 4.5 L8.5 8 L4.5 11.5" stroke="#3fb34f" stroke-width="2.4" fill="none"/></svg>
<div class="t" style="left:767.4px;top:485px;font-size:14.5px;color:#d8d8d8;letter-spacing:0.145px;-webkit-text-stroke:0.2px #d8d8d8">Import Test Results</div>
<div class="t" style="left:1299px;top:249.5px;font-size:12.1px;color:#3f9a74;font-style:italic;font-family:'Liberation Mono', monospace;">sts)</div>
<div class="a" style="left:1342px;top:128.5px;width:10px;height:10px;background:#d9a40f;"></div>
<div class="a" style="left:1335px;top:254px;width:3px;height:9px;background:#3f9a74;"></div>
<div class="a" style="left:1340px;top:255px;width:14px;height:2.5px;background:#c9a02a;"></div>
<div class="a" style="left:1340px;top:264.5px;width:14px;height:2px;background:#1f8a1f;"></div>
<div class="a" style="left:1340px;top:293px;width:14px;height:1.8px;background:#1f8a1f;"></div>
<div class="a" style="left:1340px;top:297px;width:14px;height:1.8px;background:#1f8a1f;"></div>
<div class="a" style="left:1344px;top:285px;width:7.5px;height:146px;border-radius:4px;background:#4c4e50"></div>
<div class="a" style="left:1340px;top:595px;width:14px;height:1.8px;background:#8a7d5a;"></div>
<svg class="a" style="left:1569.5px;top:104px;" width="12" height="12" viewBox="0 0 12 12"><polygon points="10.05,4.88 11.93,5.10 11.93,6.90 10.05,7.12 9.65,8.07 10.83,9.56 9.56,10.83 8.07,9.65 7.12,10.05 6.90,11.93 5.10,11.93 4.88,10.05 3.93,9.65 2.44,10.83 1.17,9.56 2.35,8.07 1.95,7.12 0.07,6.90 0.07,5.10 1.95,4.88 2.35,3.93 1.17,2.44 2.44,1.17 3.93,2.35 4.88,1.95 5.10,0.07 6.90,0.07 7.12,1.95 8.07,2.35 9.56,1.17 10.83,2.44 9.65,3.93" fill="#8a8a8a"/><circle cx="6.0" cy="6.0" r="4.44" fill="#8a8a8a"/><circle cx="6.0" cy="6.0" r="1.80" fill="#3c3f41"/></svg>
<svg class="a" style="left:1622.5px;top:107.5px;" width="15" height="16" viewBox="0 0 15 16"><rect x="0.5" y="0.5" width="10" height="10" fill="none" stroke="#4f8fd0" stroke-width="1.3"/><rect x="4.5" y="5.5" width="10" height="10" fill="#5a5d5f" stroke="#9a9a9a"/><path d="M4.5 9 H14.5 M4.5 12.5 H14.5 M8 5.5 V15.5 M11.5 5.5 V15.5" stroke="#9a9a9a" stroke-width="0.8"/></svg>
<svg class="a" style="left:313px;top:163px;" width="15" height="15" viewBox="0 0 15 15"><path d="M2 13 L6 3 L13 1 L11 9z" fill="#f08a24"/><path d="M4 12 Q8 6 14 6 L12 12z" fill="#6bbf3a"/><path d="M3 8 Q7 4 12 3" stroke="#ffd27a" stroke-width="1.3" fill="none"/></svg>
<svg class="a" style="left:313px;top:269px;" width="15" height="15" viewBox="0 0 15 15"><path d="M3 3 L11 4 L7 12z" fill="none" stroke="#9a9a9a" stroke-width="1.2"/><circle cx="3" cy="3" r="2.5" fill="#3d9be0"/><circle cx="12" cy="4" r="2.5" fill="#e35d4b"/><circle cx="7" cy="12" r="2.5" fill="#e3a92e"/></svg>
</body></html>
